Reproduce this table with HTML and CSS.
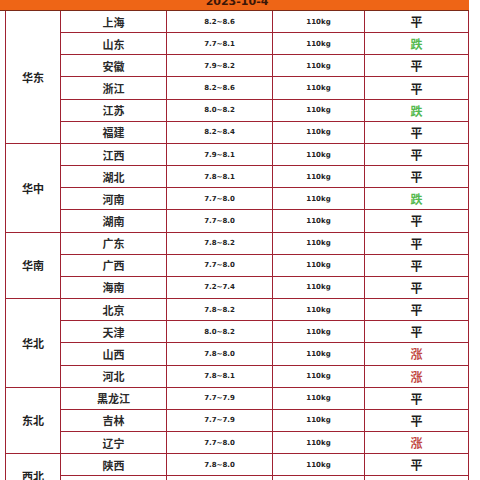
FILE: index.html
```html
<!DOCTYPE html>
<html lang="zh">
<head>
<meta charset="utf-8">
<title>2023-10-4 生猪价格</title>
<link rel="stylesheet" href="styles.css">
</head>
<body>
<div class="sheet">
  <div class="title"><span class="title-text">2023-10-4</span></div>
  <div class="grid">
    <div class="cell region r6">华东</div>
    <div class="cell prov">上海</div><div class="cell price">8.2~8.6</div><div class="cell wt">110kg</div><div class="cell trend">平</div>
    <div class="cell prov">山东</div><div class="cell price">7.7~8.1</div><div class="cell wt">110kg</div><div class="cell trend down">跌</div>
    <div class="cell prov">安徽</div><div class="cell price">7.9~8.2</div><div class="cell wt">110kg</div><div class="cell trend">平</div>
    <div class="cell prov">浙江</div><div class="cell price">8.2~8.6</div><div class="cell wt">110kg</div><div class="cell trend">平</div>
    <div class="cell prov">江苏</div><div class="cell price">8.0~8.2</div><div class="cell wt">110kg</div><div class="cell trend down">跌</div>
    <div class="cell prov">福建</div><div class="cell price">8.2~8.4</div><div class="cell wt">110kg</div><div class="cell trend">平</div>

    <div class="cell region r4">华中</div>
    <div class="cell prov">江西</div><div class="cell price">7.9~8.1</div><div class="cell wt">110kg</div><div class="cell trend">平</div>
    <div class="cell prov">湖北</div><div class="cell price">7.8~8.1</div><div class="cell wt">110kg</div><div class="cell trend">平</div>
    <div class="cell prov">河南</div><div class="cell price">7.7~8.0</div><div class="cell wt">110kg</div><div class="cell trend down">跌</div>
    <div class="cell prov">湖南</div><div class="cell price">7.7~8.0</div><div class="cell wt">110kg</div><div class="cell trend">平</div>

    <div class="cell region r3">华南</div>
    <div class="cell prov">广东</div><div class="cell price">7.8~8.2</div><div class="cell wt">110kg</div><div class="cell trend">平</div>
    <div class="cell prov">广西</div><div class="cell price">7.7~8.0</div><div class="cell wt">110kg</div><div class="cell trend">平</div>
    <div class="cell prov">海南</div><div class="cell price">7.2~7.4</div><div class="cell wt">110kg</div><div class="cell trend">平</div>

    <div class="cell region r4">华北</div>
    <div class="cell prov">北京</div><div class="cell price">7.8~8.2</div><div class="cell wt">110kg</div><div class="cell trend">平</div>
    <div class="cell prov">天津</div><div class="cell price">8.0~8.2</div><div class="cell wt">110kg</div><div class="cell trend">平</div>
    <div class="cell prov">山西</div><div class="cell price">7.8~8.0</div><div class="cell wt">110kg</div><div class="cell trend up">涨</div>
    <div class="cell prov">河北</div><div class="cell price">7.8~8.1</div><div class="cell wt">110kg</div><div class="cell trend up">涨</div>

    <div class="cell region r3">东北</div>
    <div class="cell prov">黑龙江</div><div class="cell price">7.7~7.9</div><div class="cell wt">110kg</div><div class="cell trend">平</div>
    <div class="cell prov">吉林</div><div class="cell price">7.7~7.9</div><div class="cell wt">110kg</div><div class="cell trend">平</div>
    <div class="cell prov">辽宁</div><div class="cell price">7.7~8.0</div><div class="cell wt">110kg</div><div class="cell trend up">涨</div>

    <div class="cell region r2">西北</div>
    <div class="cell prov">陕西</div><div class="cell price">7.8~8.0</div><div class="cell wt">110kg</div><div class="cell trend">平</div>
    <div class="cell prov">甘肃</div><div class="cell price">7.7~8.0</div><div class="cell wt">110kg</div><div class="cell trend">平</div>
  </div>
</div>
</body>
</html>
```
FILE: styles.css
```css
html, body {
  margin: 0;
  padding: 0;
  background: #ffffff;
  overflow: hidden;
}
body {
  font-family: "Noto Sans CJK SC", "Noto Sans", sans-serif;
  color: #222222;
}
.sheet {
  width: 469px;
}
.title {
  height: 10px;
  background: #ee6516;
  overflow: hidden;
  border-bottom: 1px solid #7a2a18;
}
.title-text {
  display: block;
  margin-left: 5px;
  text-align: center;
  font-family: "DejaVu Sans", sans-serif;
  font-weight: bold;
  font-size: 11px;
  line-height: 11px;
  margin-top: -4px;
  color: #3a1608;
}
.grid {
  margin-left: 5px;
  display: grid;
  grid-template-columns: 54px 105px 105px 91px 103px;
  grid-auto-rows: 21.17px;
  gap: 1px;
  padding: 0 1px 1px 1px;
  background: #a02232;
}
.cell {
  background: #ffffff;
  display: flex;
  align-items: center;
  justify-content: center;
  white-space: nowrap;
}
.region {
  grid-column: 1;
  font-size: 11px;
  font-weight: bold;
  color: #222;
}
.r6 { grid-row: span 6; }
.r4 { grid-row: span 4; }
.r3 { grid-row: span 3; }
.r2 { grid-row: span 2; }
.prov {
  font-size: 11px;
  font-weight: bold;
  color: #2a2a2a;
}
.price, .wt {
  font-family: "DejaVu Sans", sans-serif;
  font-size: 7px;
  font-weight: bold;
  color: #222;
}
.trend {
  font-size: 12px;
  font-weight: bold;
  color: #1e1e1e;
}
.trend.down {
  color: #55b94f;
}
.trend.up {
  color: #c24a44;
}
```
